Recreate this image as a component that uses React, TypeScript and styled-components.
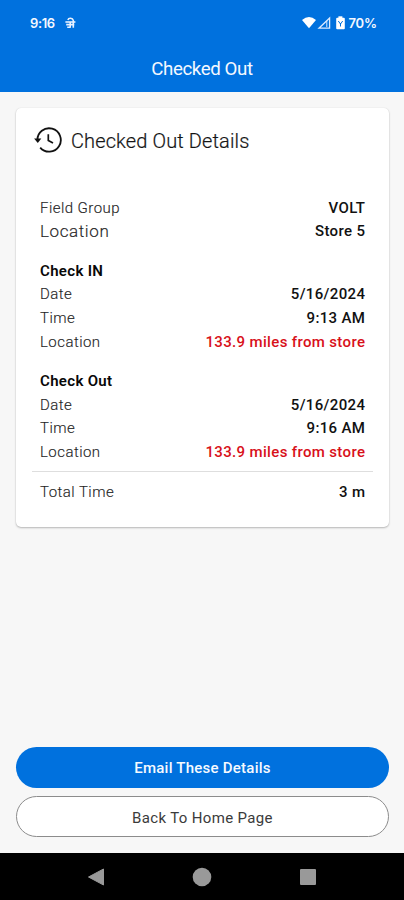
import React from "react";
import styled, { createGlobalStyle } from "styled-components";

const GlobalStyle = createGlobalStyle`
  * { box-sizing: border-box; }
  body { margin: 0; background: #f7f7f7; font-family: Roboto, "Liberation Sans", sans-serif; }
`;

const Screen = styled.div`
  width: 404px;
  height: 900px;
  display: flex;
  flex-direction: column;
  background: #f7f7f7;
  overflow: hidden;
`;

const Header = styled.header`
  height: 92px;
  flex: none;
  background: #0071de;
  color: #f4f8ff;
`;

const StatusBar = styled.div`
  height: 45px;
  padding: 0 27px 0 30px;
  display: flex;
  align-items: center;
  justify-content: space-between;
  font-family: Inter, Roboto, sans-serif;
  font-size: 13px;
  font-weight: 600;
`;

const StatusGroup = styled.div<{ $spacing: number }>`
  display: flex;
  align-items: center;
  letter-spacing: ${(p) => p.$spacing}px;
  svg { display: block; }
`;

const Clock = styled.span`
  margin-right: 10px;
`;

const Title = styled.h1`
  margin: 0;
  height: 47px;
  line-height: 48px;
  text-align: center;
  font-size: 18.7px;
  font-weight: 400;
  letter-spacing: -0.4px;
`;

const Card = styled.section`
  flex: none;
  width: 373px;
  height: 419px;
  margin: 15.5px 0 0 16px;
  padding: 16px 16px 0;
  background: #fff;
  border-radius: 5px;
  box-shadow: 0 1px 2px rgba(0, 0, 0, 0.26), 0 0 1px rgba(0, 0, 0, 0.12);
`;

const CardHeading = styled.div`
  display: flex;
  align-items: center;
  height: 33px;
  gap: 9px;
  margin-bottom: 39.6px;
  svg { display: block; flex: none; margin-left: 2px; }
`;

const CardTitle = styled.h2`
  margin: 0;
  padding-top: 1px;
  font-size: 20px;
  font-weight: 300;
  letter-spacing: 0.12px;
  color: #111;
  -webkit-text-stroke: 0.2px #222;
`;

const Group = styled.div`
  padding: 0 8px;
  margin-bottom: 15.6px;
`;

const Row = styled.div<{ $large?: boolean }>`
  height: 23.65px;
  padding-bottom: ${(p) => (p.$large ? 1.5 : 0)}px;
  display: flex;
  align-items: center;
  justify-content: space-between;
`;

const Label = styled.span<{ $large?: boolean }>`
  font-size: ${(p) => (p.$large ? 17 : 15)}px;
  font-weight: 300;
  letter-spacing: ${(p) => (p.$large ? 0.6 : 0.45)}px;
  color: #222;
  -webkit-text-stroke: 0.15px #333;
`;

const SectionTitle = styled.span`
  font-size: 15px;
  font-weight: 600;
  letter-spacing: 0.33px;
  color: #080808;
`;

const Value = styled.span<{ $alert?: boolean }>`
  font-size: 15px;
  font-weight: 500;
  letter-spacing: 0.35px;
  margin-right: -0.3px;
  color: ${(p) => (p.$alert ? "#d8101a" : "#111")};
`;

const Divider = styled.hr`
  border: 0;
  height: 1px;
  margin: -8.7px 0 8.4px;
  background: #dedede;
`;

const Actions = styled.div`
  margin: auto 15px 16px 16px;
  display: flex;
  flex-direction: column;
  gap: 8px;
`;

const Button = styled.button<{ $primary?: boolean }>`
  height: 41px;
  padding: ${(p) => (p.$primary ? 1 : 2)}px 0 0;
  border-radius: 21px;
  font-family: inherit;
  font-size: 15px;
  letter-spacing: ${(p) => (p.$primary ? 0.24 : 0.35)}px;
  font-weight: ${(p) => (p.$primary ? 500 : 400)};
  color: ${(p) => (p.$primary ? "#f6faff" : "#3b3b3b")};
  background: ${(p) => (p.$primary ? "#0071de" : "#fff")};
  border: ${(p) => (p.$primary ? "0" : "1px solid #8c8c8c")};
`;

const NavBar = styled.nav`
  flex: none;
  height: 47px;
  background: #000;
  display: flex;
  justify-content: center;
  align-items: center;
  gap: 87px;
  svg { display: block; }
`;

const HistoryIcon = () => (
  <svg width="28" height="28" viewBox="0 0 28 28" fill="none" stroke="#111" strokeWidth="1.8">
    <path d="M3.4 14.4A11.7 11.7 0 1 1 6.2 21.6" />
    <path d="M.1 12.6h7.2l-3.5 4.4z" fill="#111" stroke="none" />
    <path d="M14.3 8.2v6.2l4.7 2.5" strokeWidth="1.7" />
  </svg>
);

const BasketIcon = () => (
  <svg width="11" height="12" viewBox="0 0 11 12" fill="none" stroke="#e8f1ff">
    <path d="M2.9 3C3.6.7 7.6.7 8.3 3.4V10.8" strokeWidth="1.6" />
    <path d="M.4 5h10" strokeWidth="1.6" />
    <path d="M1.2 7.6h8M2.2 10.3h3.6M5.2 5v5.3" strokeWidth="1.6" />
  </svg>
);

const Signals = () => (
  <svg width="46" height="14" viewBox="0 0 46 14">
    <path d="M0 4Q7-2 14 4L7 12.3z" fill="#fff" />
    <path d="M27.6 2v10.2H17z" fill="none" stroke="#dbeaff" strokeWidth="1.3" />
    <path d="M24.8 5v6" stroke="#dbeaff" />
    <rect x="34.2" y="1.8" width="8.6" height="11.4" rx="1" fill="#fff" />
    <rect x="36.4" y=".3" width="4" height="2" fill="#fff" />
    <path d="M36.3 5l2.2 3 2.2-3M38.5 7v3.5" fill="none" stroke="#0071de" />
  </svg>
);

function Detail({ label, value, alert, large }: { label: string; value: string; alert?: boolean; large?: boolean }) {
  return (
    <Row $large={large}>
      <Label $large={large}>{label}</Label>
      <Value $alert={alert}>{value}</Value>
    </Row>
  );
}

function Visit({ title, time }: { title: string; time: string }) {
  return (
    <Group>
      <Row><SectionTitle>{title}</SectionTitle></Row>
      <Detail label="Date" value="5/16/2024" />
      <Detail label="Time" value={time} />
      <Detail label="Location" value="133.9 miles from store" alert />
    </Group>
  );
}

export default function App() {
  return (
    <>
      <GlobalStyle />
      <Screen>
        <Header>
          <StatusBar>
            <StatusGroup $spacing={-0.4}>
              <Clock>9:16</Clock>
              <BasketIcon />
            </StatusGroup>
            <StatusGroup $spacing={-0.1}>
              <Signals />
              <span>70%</span>
            </StatusGroup>
          </StatusBar>
          <Title>Checked Out</Title>
        </Header>
        <Card>
          <CardHeading>
            <HistoryIcon />
            <CardTitle>Checked Out Details</CardTitle>
          </CardHeading>
          <Group>
            <Detail label="Field Group" value="VOLT" />
            <Detail label="Location" value="Store 5" large />
          </Group>
          <Visit title="Check IN" time="9:13 AM" />
          <Visit title="Check Out" time="9:16 AM" />
          <Divider />
          <Group>
            <Detail label="Total Time" value="3 m" />
          </Group>
        </Card>
        <Actions>
          <Button $primary>Email These Details</Button>
          <Button>Back To Home Page</Button>
        </Actions>
        <NavBar>
          <svg width="18" height="20" viewBox="0 0 18 20"><path d="M1.5 10 16.5 2v16z" fill="#999" stroke="#999" strokeLinejoin="round" /></svg>
          <svg width="20" height="20" viewBox="0 0 20 20"><circle cx="10" cy="10" r="9.3" fill="#999" /></svg>
          <svg width="18" height="18" viewBox="0 0 18 18"><rect x="1" y="1" width="16" height="16" rx="1" fill="#999" /></svg>
        </NavBar>
      </Screen>
    </>
  );
}
